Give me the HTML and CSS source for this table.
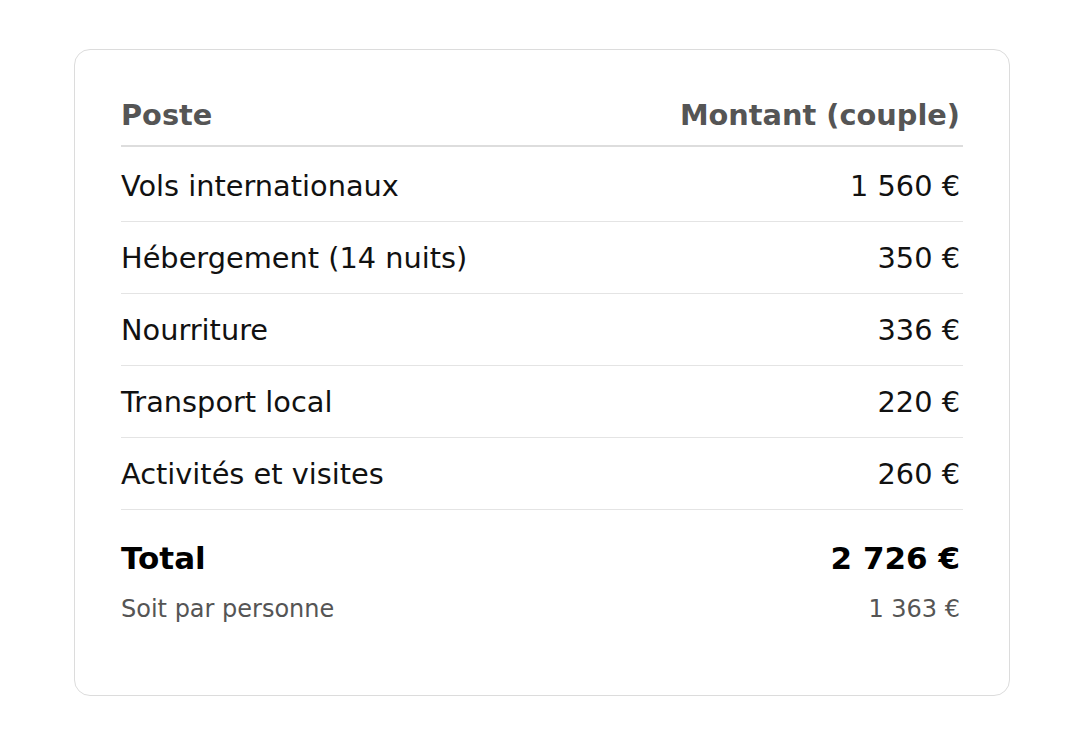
FILE: index.html
```html
<!DOCTYPE html>
<html lang="fr">
<head>
<meta charset="utf-8">
<title>Budget</title>
<link rel="stylesheet" href="styles.css">
</head>
<body>
<div class="card">
  <div class="row head">
    <span>Poste</span>
    <span class="amt">Montant (couple)</span>
  </div>
  <div class="row item first">
    <span>Vols internationaux</span>
    <span class="amt">1 560 €</span>
  </div>
  <div class="row item">
    <span>Hébergement (14 nuits)</span>
    <span class="amt">350 €</span>
  </div>
  <div class="row item">
    <span>Nourriture</span>
    <span class="amt">336 €</span>
  </div>
  <div class="row item">
    <span>Transport local</span>
    <span class="amt">220 €</span>
  </div>
  <div class="row item">
    <span>Activités et visites</span>
    <span class="amt">260 €</span>
  </div>
  <div class="row total">
    <span>Total</span>
    <span class="amt">2 726 €</span>
  </div>
  <div class="row per">
    <span>Soit par personne</span>
    <span class="amt">1 363 €</span>
  </div>
</div>
</body>
</html>
```

FILE: styles.css
```css
html, body {
  margin: 0;
  background: #ffffff;
}
body {
  padding: 49px 0 0 4px;
  font-family: "DejaVu Sans", "Liberation Sans", sans-serif;
  color: #111111;
}
.card {
  box-sizing: border-box;
  width: 936px;
  height: 647px;
  margin: 0 auto;
  padding: 49px 46px 0;
  border: 1px solid #dcdcdc;
  border-radius: 16px;
  background: #ffffff;
}
.row {
  display: flex;
  justify-content: space-between;
  align-items: center;
  white-space: nowrap;
}
.amt {
  padding-right: 3px;
}
.head {
  font-size: 28.8px;
  font-weight: bold;
  line-height: 32px;
  color: #555555;
  padding-bottom: 14px;
  border-bottom: 2px solid #dddddd;
  margin-bottom: 3px;
}
.item {
  font-size: 28.8px;
  line-height: 32px;
  padding: 20px 0 19px;
  border-bottom: 1px solid #e4e4e4;
}
.total {
  font-size: 31px;
  font-weight: bold;
  line-height: 36px;
  color: #000000;
  margin-top: 30px;
}
.per {
  font-size: 24px;
  line-height: 28px;
  color: #555555;
  margin-top: 19px;
}
```
